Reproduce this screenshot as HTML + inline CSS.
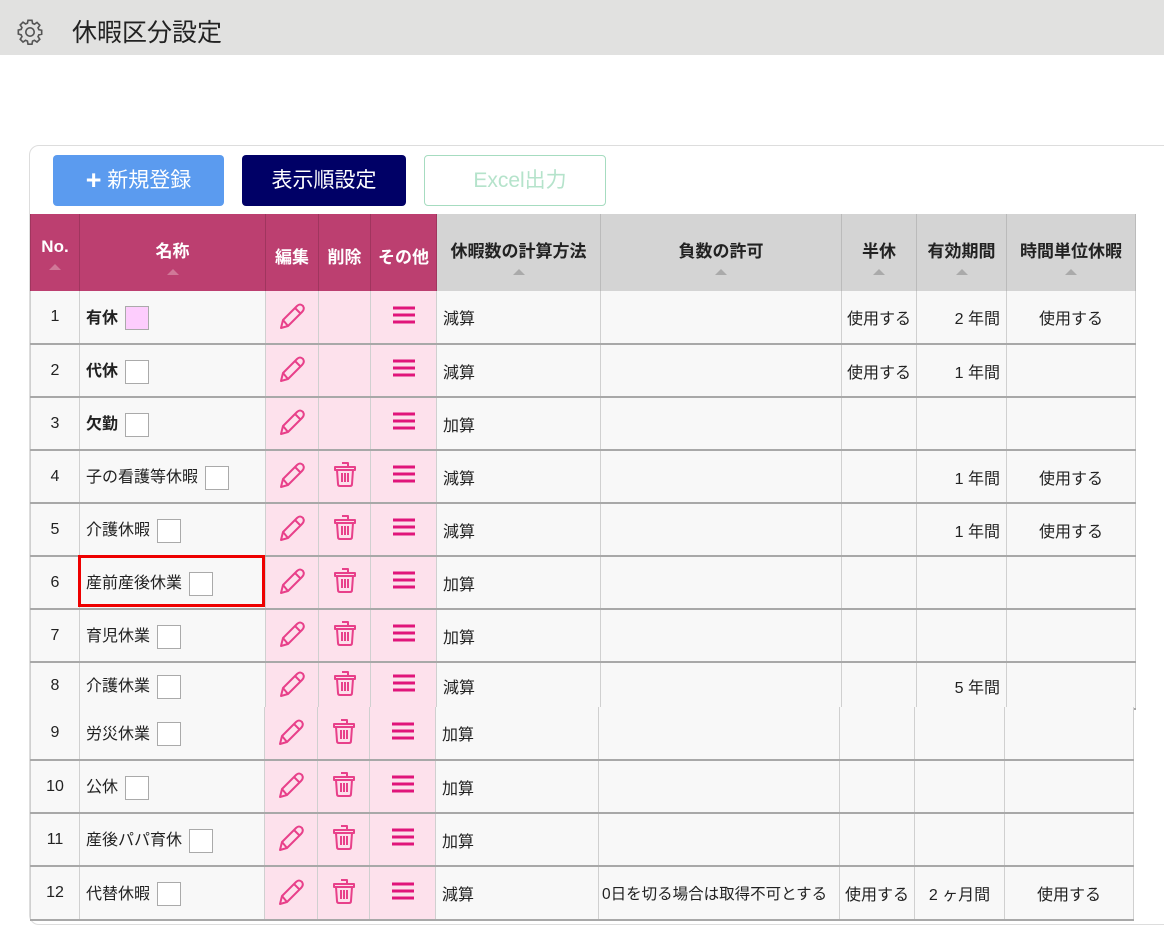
<!DOCTYPE html>
<html><head><meta charset="utf-8">
<style>
*{box-sizing:border-box;margin:0;padding:0}
body{width:1164px;height:929px;background:#fff;font-family:"Liberation Sans","Noto Sans CJK JP",sans-serif;position:relative;overflow:hidden;color:#222}
.top{position:absolute;left:0;top:0;width:1164px;height:55px;background:#e1e1e0}
.top .t{position:absolute;left:72px;top:13px;font-size:25px;color:#222}
.card{position:absolute;left:29px;top:145px;width:1140px;height:780px;border:1px solid #ddd;border-radius:10px 0 0 10px;background:#fff}
.btn{position:absolute;top:155px;height:51px;border-radius:4px;font-size:21px;text-align:center;line-height:51px}
table{position:absolute;left:30px;border-collapse:collapse;table-layout:fixed;font-size:16px}
td,th{border-left:1px solid #d0d0d0;border-right:1px solid #d0d0d0;border-bottom:2px solid #a8a8a8;background:#f8f8f8;padding:0 6px;white-space:nowrap;overflow:hidden}
th{font-size:17px;font-weight:bold;vertical-align:top;padding-top:23px;text-align:center;background:#d4d4d4;color:#222;border-bottom:none;border-color:#bbb}
th.p{background:#bc3f70;color:#fff;border-color:#a0355e}
th .a{display:block;margin:7px auto 0;width:0;height:0;border-left:6px solid transparent;border-right:6px solid transparent;border-bottom:6px solid #aaa}
th.p .a{border-bottom-color:#d07898}
td.c{text-align:center}
td.r{text-align:right}
td.k{background:#fde1ec;text-align:center;padding:0}
.cb{display:inline-block;width:24px;height:24px;border:1px solid #aaa;background:#fff;vertical-align:middle;margin-left:7px}
b{font-weight:bold}
</style></head><body>
<div class="top">
<svg style="position:absolute;left:16px;top:18px" width="28" height="28" viewBox="0 0 24 24" fill="none" stroke="#555" stroke-width="1.4"><path d="M10.3 2h3.4l.5 2.6 1.6.7 2.2-1.5 2.4 2.4-1.5 2.2.7 1.6 2.4.5v3.4l-2.4.5-.7 1.6 1.5 2.2-2.4 2.4-2.2-1.5-1.6.7-.5 2.6h-3.4l-.5-2.6-1.6-.7-2.2 1.5-2.4-2.4 1.5-2.2-.7-1.6L2 13.7v-3.4l2.4-.5.7-1.6-1.5-2.2 2.4-2.4 2.2 1.5 1.6-.7z"/><circle cx="12" cy="12" r="3.6"/></svg>
<div class="t">休暇区分設定</div>
</div>
<div class="card"></div>
<div class="btn" style="left:53px;width:171px;background:#5b9bef;color:#fff"><span style="font-size:27px;font-weight:bold;vertical-align:-2px">+</span> 新規登録</div>
<div class="btn" style="left:242px;width:164px;background:#000066;color:#fff">表示順設定</div>
<div class="btn" style="left:424px;width:182px;border:1px solid #a6dcc0;color:#b5e3cb;line-height:49px;padding-left:10px">Excel出力</div>

<svg width="0" height="0" style="position:absolute"><defs>
<symbol id="pen" viewBox="0 0 30 30"><g fill="none" stroke="#e8408a" stroke-width="2" stroke-linejoin="round"><path d="M6 20 L20 6 Q23 3 26 6 Q28 9 25 12 L11 26 L4 28 Z"/><path d="M6 20 L11 26 M18 8 L24 14"/></g></symbol>
<symbol id="bin" viewBox="0 0 30 30"><g fill="none" stroke="#e8408a" stroke-width="2" stroke-linejoin="round"><path d="M12 4h6v3M5 8h20v3H5zM7 11l1 14q0 2 2 2h10q2 0 2-2l1-14"/><path d="M12 14v9M15 14v9M18 14v9"/></g></symbol>
<symbol id="menu" viewBox="0 0 30 30"><g stroke="#e0157a" stroke-width="3"><path d="M4 8h22M4 15h22M4 22h22"/></g></symbol>
</defs></svg>

<table style="top:214px;width:1105px">
<colgroup><col style="width:49px"><col style="width:186px"><col style="width:53px"><col style="width:52px"><col style="width:66px"><col style="width:164px"><col style="width:241px"><col style="width:75px"><col style="width:90px"><col style="width:129px"></colgroup>
<tr style="height:77px"><th class="p">No.<span class="a"></span></th><th class="p">名称<span class="a"></span></th><th class="p" style="padding:29px 0 0">編集</th><th class="p" style="padding:29px 0 0">削除</th><th class="p" style="padding:29px 0 0">その他</th><th style="padding:23px 0 0">休暇数の計算方法<span class="a"></span></th><th>負数の許可<span class="a"></span></th><th>半休<span class="a"></span></th><th style="padding:23px 0 0">有効期間<span class="a"></span></th><th style="padding:23px 0 0">時間単位休暇<span class="a"></span></th></tr>
<tr style="height:53px"><td class="c">1</td><td><b>有休</b><span class="cb" style="background:#fdcdfd"></span></td><td class="k"><svg width="30" height="30"><use href="#pen"/></svg></td><td class="k"></td><td class="k"><svg width="30" height="30"><use href="#menu"/></svg></td><td>減算</td><td></td><td class="c" style="padding:0">使用する</td><td class="r">2 年間</td><td class="c">使用する</td></tr>
<tr style="height:53px"><td class="c">2</td><td><b>代休</b><span class="cb"></span></td><td class="k"><svg width="30" height="30"><use href="#pen"/></svg></td><td class="k"></td><td class="k"><svg width="30" height="30"><use href="#menu"/></svg></td><td>減算</td><td></td><td class="c" style="padding:0">使用する</td><td class="r">1 年間</td><td></td></tr>
<tr style="height:53px"><td class="c">3</td><td><b>欠勤</b><span class="cb"></span></td><td class="k"><svg width="30" height="30"><use href="#pen"/></svg></td><td class="k"></td><td class="k"><svg width="30" height="30"><use href="#menu"/></svg></td><td>加算</td><td></td><td></td><td></td><td></td></tr>
<tr style="height:53px"><td class="c">4</td><td>子の看護等休暇<span class="cb"></span></td><td class="k"><svg width="30" height="30"><use href="#pen"/></svg></td><td class="k"><svg width="30" height="30"><use href="#bin"/></svg></td><td class="k"><svg width="30" height="30"><use href="#menu"/></svg></td><td>減算</td><td></td><td></td><td class="r">1 年間</td><td class="c">使用する</td></tr>
<tr style="height:53px"><td class="c">5</td><td>介護休暇<span class="cb"></span></td><td class="k"><svg width="30" height="30"><use href="#pen"/></svg></td><td class="k"><svg width="30" height="30"><use href="#bin"/></svg></td><td class="k"><svg width="30" height="30"><use href="#menu"/></svg></td><td>減算</td><td></td><td></td><td class="r">1 年間</td><td class="c">使用する</td></tr>
<tr style="height:53px"><td class="c">6</td><td>産前産後休業<span class="cb"></span></td><td class="k"><svg width="30" height="30"><use href="#pen"/></svg></td><td class="k"><svg width="30" height="30"><use href="#bin"/></svg></td><td class="k"><svg width="30" height="30"><use href="#menu"/></svg></td><td>加算</td><td></td><td></td><td></td><td></td></tr>
<tr style="height:53px"><td class="c">7</td><td>育児休業<span class="cb"></span></td><td class="k"><svg width="30" height="30"><use href="#pen"/></svg></td><td class="k"><svg width="30" height="30"><use href="#bin"/></svg></td><td class="k"><svg width="30" height="30"><use href="#menu"/></svg></td><td>加算</td><td></td><td></td><td></td><td></td></tr>
<tr style="height:47px"><td class="c">8</td><td>介護休業<span class="cb"></span></td><td class="k"><svg width="30" height="30"><use href="#pen"/></svg></td><td class="k"><svg width="30" height="30"><use href="#bin"/></svg></td><td class="k"><svg width="30" height="30"><use href="#menu"/></svg></td><td>減算</td><td></td><td></td><td class="r">5 年間</td><td></td></tr>
</table>

<table style="top:707px;width:1103px">
<colgroup><col style="width:49px"><col style="width:185px"><col style="width:53px"><col style="width:52px"><col style="width:66px"><col style="width:163px"><col style="width:241px"><col style="width:75px"><col style="width:90px"><col style="width:129px"></colgroup>
<tr style="height:53px"><td class="c">9</td><td>労災休業<span class="cb"></span></td><td class="k"><svg width="30" height="30"><use href="#pen"/></svg></td><td class="k"><svg width="30" height="30"><use href="#bin"/></svg></td><td class="k"><svg width="30" height="30"><use href="#menu"/></svg></td><td>加算</td><td></td><td></td><td></td><td></td></tr>
<tr style="height:53px"><td class="c">10</td><td>公休<span class="cb"></span></td><td class="k"><svg width="30" height="30"><use href="#pen"/></svg></td><td class="k"><svg width="30" height="30"><use href="#bin"/></svg></td><td class="k"><svg width="30" height="30"><use href="#menu"/></svg></td><td>加算</td><td></td><td></td><td></td><td></td></tr>
<tr style="height:53px"><td class="c">11</td><td>産後パパ育休<span class="cb"></span></td><td class="k"><svg width="30" height="30"><use href="#pen"/></svg></td><td class="k"><svg width="30" height="30"><use href="#bin"/></svg></td><td class="k"><svg width="30" height="30"><use href="#menu"/></svg></td><td>加算</td><td></td><td></td><td></td><td></td></tr>
<tr style="height:54px"><td class="c">12</td><td>代替休暇<span class="cb"></span></td><td class="k"><svg width="30" height="30"><use href="#pen"/></svg></td><td class="k"><svg width="30" height="30"><use href="#bin"/></svg></td><td class="k"><svg width="30" height="30"><use href="#menu"/></svg></td><td>減算</td><td style="padding:0 3px;font-size:15.5px">0日を切る場合は取得不可とする</td><td class="c" style="padding:0">使用する</td><td class="c">2 ヶ月間</td><td class="c">使用する</td></tr>
</table>
<div style="position:absolute;left:78px;top:555px;width:187px;height:52px;border:3px solid #e00"></div>
</body></html>
